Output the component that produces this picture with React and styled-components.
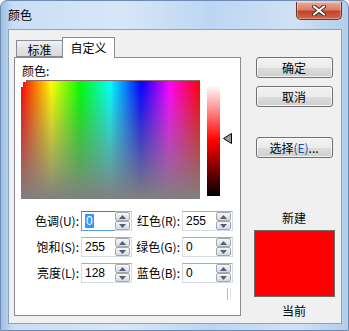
import React from 'react';
import styled, { createGlobalStyle } from 'styled-components';

const GlobalStyle = createGlobalStyle`
	html, body {
		margin: 0;
		padding: 0;
		background: #ffffff;
	}
	body {
		font-family: 'Noto Sans CJK SC', 'Liberation Sans', sans-serif;
		font-size: 12px;
		color: #000;
	}
`;

const Window = styled.div`
	width: 349px;
	height: 331px;
	box-sizing: border-box;
	display: flex;
	flex-direction: column;
	border: 1px solid #6d8bb0;
	border-radius: 7px 7px 0 0;
	background: linear-gradient(
		to right,
		#9fbfe2 0px,
		#c9def4 12px,
		#d7e7f8 35%,
		#bcd6f2 60%,
		#cfe1f5 85%,
		#b3cdea 100%
	);
	overflow: hidden;
`;

const TitleBar = styled.div`
	height: 28px;
	display: flex;
	align-items: flex-start;
	justify-content: space-between;
	.title {
		margin: 6px 0 0 7px;
		font-size: 12px;
		line-height: 16px;
	}
`;

const CloseBtn = styled.div`
	width: 46px;
	height: 18px;
	margin: 1px 6px 0 0;
	box-sizing: border-box;
	border: 1px solid #6a3126;
	border-top: none;
	border-radius: 0 0 5px 5px;
	background: linear-gradient(#e9a898 0%, #d8806a 45%, #c3432b 55%, #d7634a 100%);
	display: flex;
	align-items: center;
	justify-content: center;
	box-shadow: inset 0 0 0 1px rgba(255, 255, 255, 0.35);
`;

const Client = styled.div`
	flex: 1;
	margin: 0 6px 6px 7px;
	box-sizing: border-box;
	border: 1px solid #8da2bd;
	background: #f0f0f0;
	display: flex;
	padding-left: 5px;
`;

const LeftCol = styled.div`
	width: 227px;
	display: flex;
	flex-direction: column;
	padding-top: 7px;
`;

const TabStrip = styled.div`
	height: 20px;
	display: flex;
	align-items: flex-end;
	padding-left: 2px;
	position: relative;
	z-index: 1;
`;

const Tab = styled.div`
	box-sizing: border-box;
	width: ${(p) => (p.$active ? '53px' : '47px')};
	height: ${(p) => (p.$active ? '21px' : '17px')};
	margin-bottom: ${(p) => (p.$active ? '-1px' : '0')};
	margin-left: ${(p) => (p.$active ? '-1px' : '0')};
	border: 1px solid #898c95;
	border-bottom: ${(p) => (p.$active ? 'none' : '1px solid #898c95')};
	background: ${(p) => (p.$active ? '#ffffff' : 'linear-gradient(#f2f2f2, #e3e3e3 50%, #d9d9d9)')};
	display: flex;
	align-items: center;
	justify-content: center;
	font-size: 12px;
	line-height: 14px;
	padding-top: ${(p) => (p.$active ? '0' : '2px')};
`;

const Panel = styled.div`
	width: 227px;
	height: 259px;
	box-sizing: border-box;
	border: 1px solid #898c95;
	background: #ffffff;
	padding: 5px 0 0 6px;
	display: flex;
	flex-direction: column;
`;

const ColorLabel = styled.div`
	height: 16px;
	line-height: 16px;
	font-size: 12px;
	margin-left: 1px;
`;

const PickerRow = styled.div`
	display: flex;
	align-items: flex-start;
	margin-top: 1px;
`;

const Spectrum = styled.div`
	position: relative;
	width: 179px;
	height: 119px;
	box-sizing: border-box;
	border-top: 1px solid #8a6a6a;
	background:
		linear-gradient(to bottom, rgba(128, 128, 128, 0), rgba(128, 128, 128, 1)),
		linear-gradient(
			to right,
			#ff0000 0%,
			#ffff00 17%,
			#00ff00 33%,
			#00ffff 50%,
			#0000ff 67%,
			#ff00ff 83%,
			#ff0000 100%
		);
`;

const Cursor = styled.div`
	position: absolute;
	left: 0;
	top: 0;
	width: 2px;
	height: 6px;
	background: #ffffff;
	&::after {
		content: '';
		position: absolute;
		left: 0;
		top: -1px;
		width: 5px;
		height: 2px;
		background: #ffffff;
	}
`;

const LumBar = styled.div`
	width: 13px;
	height: 111px;
	margin: 5px 0 0 7px;
	background: linear-gradient(#ffffff 0%, #ff0000 50%, #000000 100%);
`;

const Arrow = styled.svg`
	margin: 53px 0 0 3px;
`;

const Fields = styled.div`
	margin-top: 12px;
	display: flex;
	flex-direction: column;
	gap: 6px;
`;

const Row = styled.div`
	display: flex;
	align-items: center;
	height: 20px;
`;

const Label = styled.div`
	width: ${(p) => p.$w}px;
	margin-left: ${(p) => p.$ml || 0}px;
	box-sizing: border-box;
	padding-right: 2px;
	display: flex;
	justify-content: flex-end;
	white-space: nowrap;
	font-size: 12px;
	line-height: 20px;
`;

const InputBox = styled.div`
	width: 34px;
	height: 20px;
	box-sizing: border-box;
	border: 1px solid ${(p) => (p.$focus ? '#569de5' : '#d5dbe3')};
	border-top-color: ${(p) => (p.$focus ? '#3c7fb1' : '#abadb3')};
	border-right: none;
	background: #fff;
	padding: 2px 0 0 3px;
	font-family: 'Liberation Sans', sans-serif;
	font-size: 12px;
	line-height: 15px;
	.sel {
		background: #3399ff;
		color: #fff;
		padding: 0 1px;
	}
`;

const Spin = styled.div`
	width: 17px;
	height: 20px;
	box-sizing: border-box;
	border: 1px solid #d5dbe3;
	border-left: none;
	border-top-color: #abadb3;
	background: #fff;
	display: flex;
	flex-direction: column;
	padding: 0 1px 0 0;
`;

const SpinHalf = styled.div`
	flex: 1;
	box-sizing: border-box;
	border: 1px solid #a7a7a7;
	border-radius: 2px;
	background: linear-gradient(#f7f7f7, #e8e8e8 50%, #d9d9d9);
	display: flex;
	align-items: center;
	justify-content: center;
`;

const Grip = styled.div`
	align-self: flex-end;
	width: 2px;
	height: 12px;
	margin: 5px 9px 0 0;
	border-left: 1px solid #bbbbbb;
	border-right: 1px solid #e5e5e5;
`;

const RightCol = styled.div`
	display: flex;
	flex-direction: column;
	align-items: center;
	margin-left: 13px;
	width: 80px;
	padding-top: 27px;
`;

const Button = styled.div`
	width: 77px;
	height: 21px;
	box-sizing: border-box;
	border: 1px solid #707070;
	border-radius: 3px;
	background: linear-gradient(#f2f2f2 0%, #ebebeb 50%, #dddddd 51%, #cfcfcf 100%);
	box-shadow: inset 0 0 0 1px rgba(255, 255, 255, 0.7);
	display: flex;
	align-items: center;
	justify-content: center;
	font-size: 12px;
	margin-bottom: ${(p) => p.$mb || 0}px;
	.u {
		color: #1a4fa0;
	}
`;

const Caption = styled.div`
	font-size: 12px;
	line-height: 14px;
	text-align: center;
	margin-top: ${(p) => p.$mt || 0}px;
`;

const Swatch = styled.div`
	width: 81px;
	height: 67px;
	box-sizing: border-box;
	border: 1px solid #6d6d6d;
	background: #ff0000;
	margin-top: 5px;
`;

const Tri = ({ up }) => (
	<svg width="7" height="4" viewBox="0 0 7 4">
		<polygon points={up ? '3.5,0 7,4 0,4' : '0,0 7,0 3.5,4'} fill="#4a5f86" />
	</svg>
);

function Field({ label, value, w, ml, focus }) {
	return (
		<>
			<Label $w={w} $ml={ml}>{label}</Label>
			<InputBox $focus={focus}>
				{focus ? <span className="sel">{value}</span> : value}
			</InputBox>
			<Spin>
				<SpinHalf>
					<Tri up />
				</SpinHalf>
				<SpinHalf>
					<Tri />
				</SpinHalf>
			</Spin>
		</>
	);
}

const rows = [
	[
		{ label: '色调(U):', value: '0', focus: true },
		{ label: '红色(R):', value: '255' },
	],
	[
		{ label: '饱和(S):', value: '255' },
		{ label: '绿色(G):', value: '0' },
	],
	[
		{ label: '亮度(L):', value: '128' },
		{ label: '蓝色(B):', value: '0' },
	],
];

export default function App() {
	return (
		<>
			<GlobalStyle />
			<Window>
				<TitleBar>
					<span className="title">颜色</span>
					<CloseBtn>
						<svg width="14" height="11" viewBox="0 0 14 11">
							<path
								d="M2 1.5 L12 9.5 M12 1.5 L2 9.5"
								stroke="#3c2a28"
								strokeWidth="4"
								strokeLinecap="round"
							/>
							<path
								d="M2 1.5 L12 9.5 M12 1.5 L2 9.5"
								stroke="#ffffff"
								strokeWidth="2.2"
								strokeLinecap="round"
							/>
						</svg>
					</CloseBtn>
				</TitleBar>
				<Client>
					<LeftCol>
						<TabStrip>
							<Tab>标准</Tab>
							<Tab $active>自定义</Tab>
						</TabStrip>
						<Panel>
							<ColorLabel>颜色:</ColorLabel>
							<PickerRow>
								<Spectrum>
									<Cursor />
								</Spectrum>
								<LumBar />
								<Arrow width="9" height="11" viewBox="0 0 9 11">
									<polygon points="0.5,5.5 8.5,0.5 8.5,10.5" fill="#9a9a9a" stroke="#000" />
								</Arrow>
							</PickerRow>
							<Fields>
								{rows.map(([a, b]) => (
									<Row key={a.label}>
										<Field {...a} w={60} />
										<Field {...b} w={49} ml={1} />
									</Row>
								))}
							</Fields>
							<Grip />
						</Panel>
					</LeftCol>
					<RightCol>
						<Button $mb={8}>确定</Button>
						<Button $mb={30}>取消</Button>
						<Button>
							选择<span className="u">(E)</span>...
						</Button>
						<Caption $mt={53}>新建</Caption>
						<Swatch />
						<Caption $mt={7}>当前</Caption>
					</RightCol>
				</Client>
			</Window>
		</>
	);
}
